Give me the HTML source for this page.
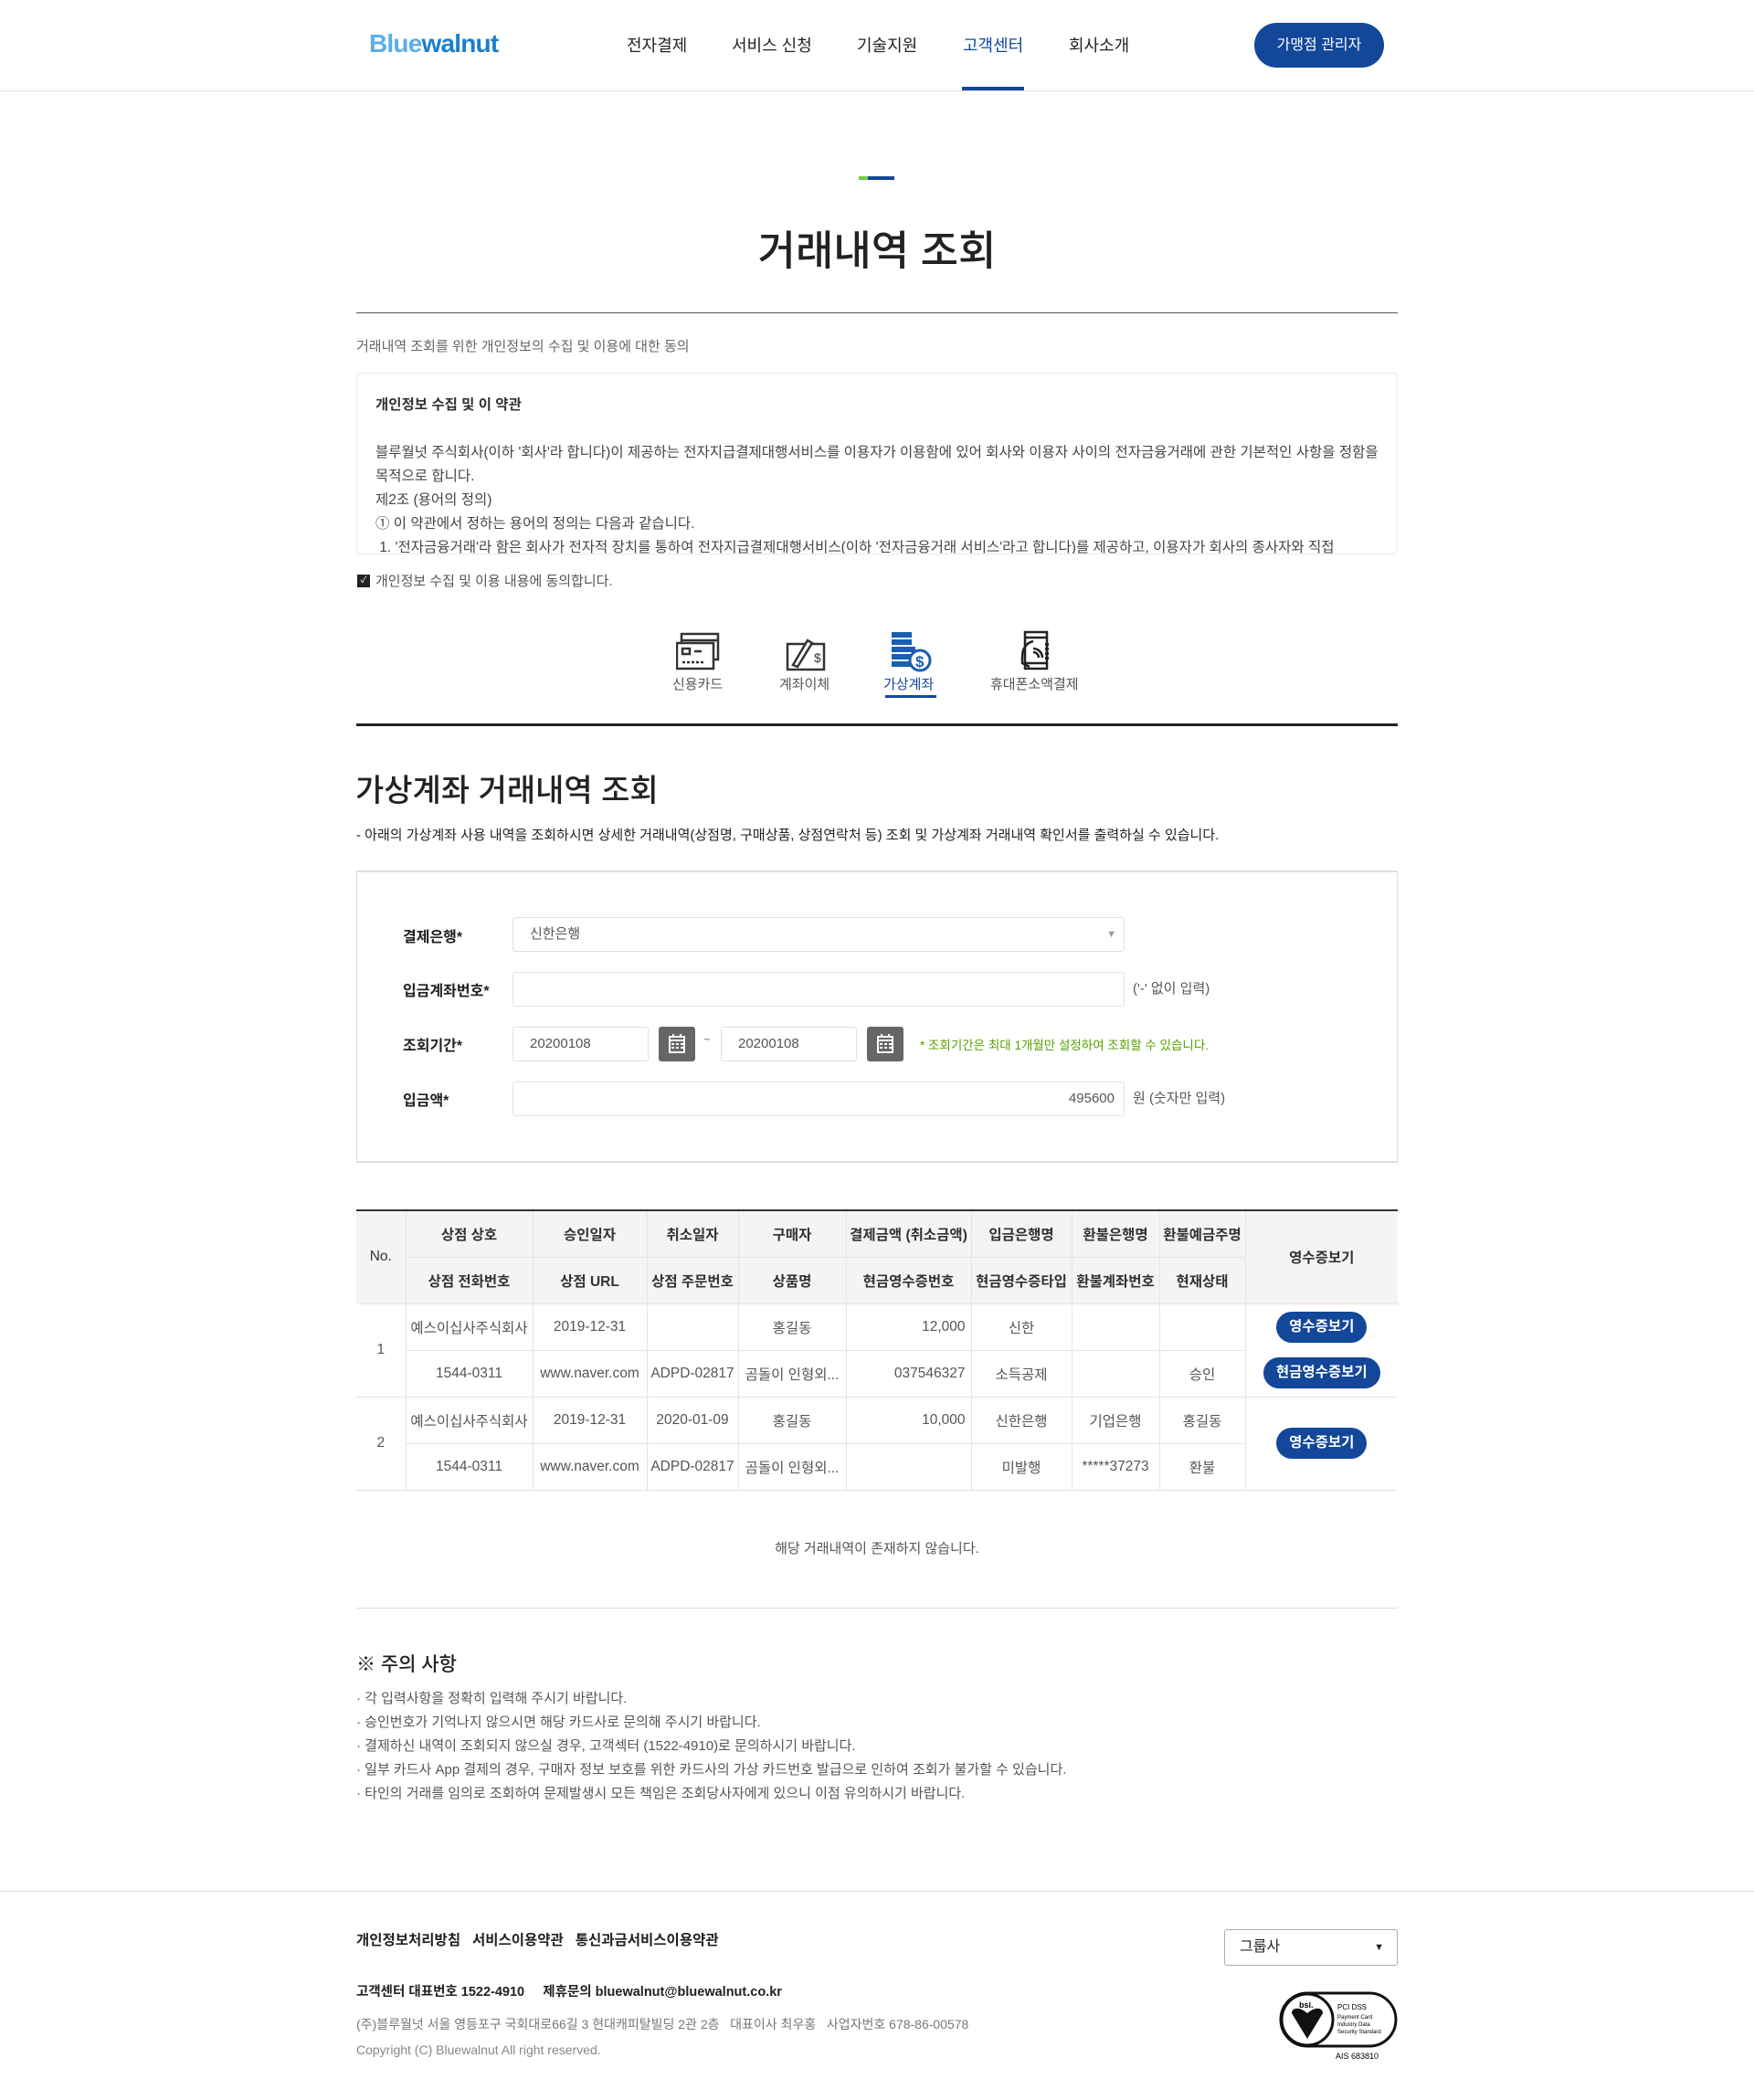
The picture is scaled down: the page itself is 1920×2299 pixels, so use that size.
<!DOCTYPE html>
<html><head><meta charset="utf-8">
<style>
*{margin:0;padding:0;box-sizing:border-box}
body{width:1920px;height:2299px;position:relative;background:#fff;font-family:"Liberation Sans","Noto Sans CJK KR",sans-serif;color:#333;overflow:hidden}
.a{position:absolute;white-space:nowrap}
.nav{font-size:18px;color:#222;top:36px}
.inp{position:absolute;border:1px solid #e2e2e2;border-radius:3px;background:#fff;font-size:15px;color:#555;padding:0 18px;line-height:36px;height:38px}
.lbl{font-size:16px;color:#222;font-weight:bold}
.cal{position:absolute;width:40px;height:38px;background:#666;border-radius:3px}
table{position:absolute;left:390px;top:1324px;width:1140px;border-collapse:collapse;table-layout:fixed;font-size:15.5px;color:#555}
td,th{border:1px solid #e4e4e4;height:51px;text-align:center;overflow:hidden;white-space:nowrap}
th{background:#f4f4f4;color:#333;font-weight:bold;font-size:15.5px}
tr td:first-child,tr th:first-child{border-left:none}
tr td:last-child,tr th:last-child{border-right:none}
.btn{display:inline-block;background:#12479a;color:#fff;font-weight:bold;border-radius:18px;padding:0 14px;line-height:34px;font-size:15.5px}
.li{font-size:15px;color:#555;left:390px}
</style></head><body>
<!-- header -->
<div class="a" style="left:404px;top:32px;font-size:28px;font-weight:bold;letter-spacing:-0.8px"><span style="color:#5aaee8">Blue</span><span style="color:#1a7fce">walnut</span></div>
<div class="a nav" style="left:686px">전자결제</div>
<div class="a nav" style="left:801px">서비스 신청</div>
<div class="a nav" style="left:938px">기술지원</div>
<div class="a nav" style="left:1054px;color:#12479a">고객센터</div>
<div class="a nav" style="left:1170px">회사소개</div>
<div class="a" style="left:1053px;top:95px;width:68px;height:4px;background:#12479a"></div>
<div class="a" style="left:1373px;top:25px;width:142px;height:49px;border-radius:25px;background:#12479a;color:#fff;font-size:16px;text-align:center;line-height:49px">가맹점 관리자</div>
<div class="a" style="left:0;top:99px;width:1920px;height:1px;background:#e5e5e5"></div>

<!-- title -->
<div class="a" style="left:940px;top:193px;width:10px;height:4px;background:#7ac943"></div>
<div class="a" style="left:950px;top:193px;width:29px;height:4px;background:#12479a"></div>
<div class="a" style="left:0;width:1920px;top:238px;text-align:center;font-size:45px;color:#222;font-weight:500">거래내역 조회</div>
<div class="a" style="left:390px;top:342px;width:1140px;height:1px;background:#555"></div>
<div class="a" style="left:390px;top:368px;font-size:15px;color:#666">거래내역 조회를 위한 개인정보의 수집 및 이용에 대한 동의</div>
<div class="a" style="left:390px;top:408px;width:1140px;height:199px;border:1px solid #e8e8e8;border-radius:4px;overflow:hidden;padding:22px 20px;font-size:15.5px;color:#444;line-height:26px;white-space:normal">
<div style="font-weight:bold;color:#333;margin-bottom:26px">개인정보 수집 및 이 약관</div>
블루월넛 주식회사(이하 '회사'라 합니다)이 제공하는 전자지급결제대행서비스를 이용자가 이용함에 있어 회사와 이용자 사이의 전자금융거래에 관한 기본적인 사항을 정함을 목적으로 합니다.<br>제2조 (용어의 정의)<br>① 이 약관에서 정하는 용어의 정의는 다음과 같습니다.<br>&nbsp;1. '전자금융거래'라 함은 회사가 전자적 장치를 통하여 전자지급결제대행서비스(이하 '전자금융거래 서비스'라고 합니다)를 제공하고, 이용자가 회사의 종사자와 직접
</div>
<div class="a" style="left:391px;top:629px;width:14px;height:14px;background:#222;color:#fff;font-size:10px;text-align:center;line-height:14px">✓</div>
<div class="a" style="left:411px;top:625px;font-size:15px;color:#555">개인정보 수집 및 이용 내용에 동의합니다.</div>

<!-- tabs icons -->
<svg class="a" style="left:740px;top:692px" width="48" height="42" viewBox="0 0 48 42" fill="none" stroke="#333" stroke-width="2.5"><rect x="6" y="2" width="40" height="28" fill="#fff"/><line x1="6" y1="9" x2="46" y2="9"/><rect x="1" y="12" width="40" height="28" fill="#fff"/><rect x="7" y="18" width="8" height="6"/><line x1="20" y1="21" x2="28" y2="21"/><line x1="7" y1="33" x2="30" y2="33" stroke-dasharray="3 2"/></svg>
<svg class="a" style="left:860px;top:695px" width="46" height="40" viewBox="0 0 46 40" fill="none" stroke="#333" stroke-width="2.5"><rect x="2" y="10" width="40" height="28"/><path d="M8 33 L24 6 L29 9 L13 35 Z" fill="#fff"/><text x="31" y="30" font-size="14" fill="#333" stroke="none" font-family="Liberation Sans">$</text></svg>
<svg class="a" style="left:974px;top:690px" width="46" height="46" viewBox="0 0 46 46"><g fill="#1a5eb0"><rect x="2" y="2" width="22" height="6"/><rect x="2" y="10" width="22" height="6"/><rect x="2" y="18" width="26" height="6"/><rect x="2" y="26" width="22" height="6"/><rect x="2" y="34" width="22" height="6"/></g><circle cx="33" cy="33" r="11" fill="#fff" stroke="#1a5eb0" stroke-width="3"/><text x="28" y="40" font-size="17" font-weight="bold" fill="#1a5eb0" font-family="Liberation Sans">$</text></svg>
<svg class="a" style="left:1115px;top:690px" width="40" height="46" viewBox="0 0 40 46" fill="none" stroke="#222" stroke-width="2.5"><rect x="7" y="2" width="24" height="40"/><line x1="7" y1="8" x2="31" y2="8"/><line x1="7" y1="36" x2="31" y2="36"/><path d="M16 12 C8 14 4 20 4 30 L4 36 L12 40"/><path d="M16 24 a6 6 0 0 1 6 6 M16 20 a10 10 0 0 1 10 10"/><line x1="31" y1="14" x2="31" y2="32" stroke-dasharray="3 2" stroke-width="4"/></svg>
<div class="a" style="left:736px;top:738px;font-size:15px;color:#555">신용카드</div>
<div class="a" style="left:853px;top:738px;font-size:15px;color:#555">계좌이체</div>
<div class="a" style="left:967px;top:738px;font-size:15px;color:#12479a">가상계좌</div>
<div class="a" style="left:969px;top:761px;width:56px;height:3px;background:#12479a"></div>
<div class="a" style="left:1084px;top:738px;font-size:15px;color:#555">휴대폰소액결제</div>
<div class="a" style="left:390px;top:792px;width:1140px;height:3px;background:#222"></div>

<!-- section -->
<div class="a" style="left:389px;top:838px;font-size:34px;color:#222;font-weight:500">가상계좌 거래내역 조회</div>
<div class="a" style="left:390px;top:903px;font-size:15px;color:#222">- 아래의 가상계좌 사용 내역을 조회하시면 상세한 거래내역(상점명, 구매상품, 상점연락처 등) 조회 및 가상계좌 거래내역 확인서를 출력하실 수 있습니다.</div>
<div class="a" style="left:390px;top:953px;width:1140px;height:320px;border:2px solid #ddd;border-width:2px 1px 2px 1px"></div>
<div class="a lbl" style="left:441px;top:1012px">결제은행*</div>
<div class="inp" style="left:561px;top:1004px;width:670px">신한은행<span style="position:absolute;right:8px;color:#999;font-size:11px">▼</span></div>
<div class="a lbl" style="left:441px;top:1071px">입금계좌번호*</div>
<div class="inp" style="left:561px;top:1064px;width:670px"></div>
<div class="a" style="left:1240px;top:1071px;font-size:15px;color:#555">('-' 없이 입력)</div>
<div class="a lbl" style="left:441px;top:1131px">조회기간*</div>
<div class="inp" style="left:561px;top:1124px;width:149px">20200108</div>
<div class="cal" style="left:721px;top:1124px"><svg width="40" height="38"><g fill="none" stroke="#fff" stroke-width="2"><rect x="12" y="11" width="16" height="17"/><line x1="12" y1="15" x2="28" y2="15"/><line x1="16" y1="8" x2="16" y2="12"/><line x1="24" y1="8" x2="24" y2="12"/></g><g fill="#fff"><rect x="14" y="18" width="3" height="2"/><rect x="19" y="18" width="3" height="2"/><rect x="24" y="18" width="3" height="2"/><rect x="14" y="22" width="3" height="2"/><rect x="19" y="22" width="3" height="2"/><rect x="24" y="22" width="3" height="2"/></g></svg></div>
<div class="a" style="left:770px;top:1130px;font-size:13px;color:#777">~</div>
<div class="inp" style="left:789px;top:1124px;width:149px">20200108</div>
<div class="cal" style="left:949px;top:1124px"><svg width="40" height="38"><g fill="none" stroke="#fff" stroke-width="2"><rect x="12" y="11" width="16" height="17"/><line x1="12" y1="15" x2="28" y2="15"/><line x1="16" y1="8" x2="16" y2="12"/><line x1="24" y1="8" x2="24" y2="12"/></g><g fill="#fff"><rect x="14" y="18" width="3" height="2"/><rect x="19" y="18" width="3" height="2"/><rect x="24" y="18" width="3" height="2"/><rect x="14" y="22" width="3" height="2"/><rect x="19" y="22" width="3" height="2"/><rect x="24" y="22" width="3" height="2"/></g></svg></div>
<div class="a" style="left:1007px;top:1133px;font-size:13.5px;color:#56a200">* 조회기간은 최대 1개월만 설정하여 조회할 수 있습니다.</div>
<div class="a lbl" style="left:441px;top:1191px">입금액*</div>
<div class="inp" style="left:561px;top:1184px;width:670px;text-align:right;padding-right:10px">495600</div>
<div class="a" style="left:1240px;top:1191px;font-size:15px;color:#555">원 (숫자만 입력)</div>

<!-- table -->
<table style="border-top:2px solid #333">
<colgroup><col style="width:54px"><col style="width:139px"><col style="width:125px"><col style="width:100px"><col style="width:118px"><col style="width:137px"><col style="width:110px"><col style="width:96px"><col style="width:94px"><col style="width:167px"></colgroup>
<tr><th rowspan="2" style="font-weight:normal">No.</th><th>상점 상호</th><th>승인일자</th><th>취소일자</th><th>구매자</th><th>결제금액 (취소금액)</th><th>입금은행명</th><th>환불은행명</th><th>환불예금주명</th><th rowspan="2">영수증보기</th></tr>
<tr><th>상점 전화번호</th><th>상점 URL</th><th>상점 주문번호</th><th>상품명</th><th>현금영수증번호</th><th>현금영수증타입</th><th>환불계좌번호</th><th>현재상태</th></tr>
<tr><td rowspan="2">1</td><td>예스이십사주식회사</td><td>2019-12-31</td><td></td><td>홍길동</td><td style="text-align:right;padding-right:6px">12,000</td><td>신한</td><td></td><td></td><td style="border-bottom:none"><span class="btn">영수증보기</span></td></tr>
<tr><td>1544-0311</td><td>www.naver.com</td><td>ADPD-02817</td><td>곰돌이 인형외...</td><td style="text-align:right;padding-right:6px">037546327</td><td>소득공제</td><td></td><td>승인</td><td style="border-top:none"><span class="btn">현금영수증보기</span></td></tr>
<tr><td rowspan="2">2</td><td>예스이십사주식회사</td><td>2019-12-31</td><td>2020-01-09</td><td>홍길동</td><td style="text-align:right;padding-right:6px">10,000</td><td>신한은행</td><td>기업은행</td><td>홍길동</td><td rowspan="2"><span class="btn">영수증보기</span></td></tr>
<tr><td>1544-0311</td><td>www.naver.com</td><td>ADPD-02817</td><td>곰돌이 인형외...</td><td></td><td>미발행</td><td>*****37273</td><td>환불</td></tr>
</table>
<div class="a" style="left:0;width:1920px;text-align:center;top:1684px;font-size:15px;color:#555">해당 거래내역이 존재하지 않습니다.</div>
<div class="a" style="left:390px;top:1760px;width:1140px;height:1px;background:#ddd"></div>

<div class="a" style="left:390px;top:1806px;font-size:21px;color:#222;font-weight:500">※ 주의 사항</div>
<div class="a li" style="top:1848px">· 각 입력사항을 정확히 입력해 주시기 바랍니다.</div>
<div class="a li" style="top:1874px">· 승인번호가 기억나지 않으시면 해당 카드사로 문의해 주시기 바랍니다.</div>
<div class="a li" style="top:1900px">· 결제하신 내역이 조회되지 않으실 경우, 고객섹터 (1522-4910)로 문의하시기 바랍니다.</div>
<div class="a li" style="top:1926px">· 일부 카드사 App 결제의 경우, 구매자 정보 보호를 위한 카드사의 가상 카드번호 발급으로 인하여 조회가 불가할 수 있습니다.</div>
<div class="a li" style="top:1952px">· 타인의 거래를 임의로 조회하여 문제발생시 모든 책임은 조회당사자에게 있으니 이점 유의하시기 바랍니다.</div>

<!-- footer -->
<div class="a" style="left:0;top:2070px;width:1920px;height:1px;background:#ddd"></div>
<div class="a" style="left:390px;top:2112px;font-size:15.5px;font-weight:bold;color:#222">개인정보처리방침&nbsp;&nbsp;&nbsp;서비스이용약관&nbsp;&nbsp;&nbsp;통신과금서비스이용약관</div>
<div class="a" style="left:1340px;top:2112px;width:190px;height:40px;border:1px solid #aaa;border-radius:3px;font-size:16px;color:#222;line-height:38px;padding-left:16px">그룹사<span style="position:absolute;right:14px;font-size:11px">▼</span></div>
<div class="a" style="left:390px;top:2169px;font-size:14.5px;font-weight:bold;color:#222">고객센터 대표번호 1522-4910&nbsp;&nbsp;&nbsp;&nbsp;&nbsp;제휴문의 bluewalnut@bluewalnut.co.kr</div>
<div class="a" style="left:390px;top:2206px;font-size:14px;color:#777">(주)블루월넛 서울 영등포구 국회대로66길 3 현대캐피탈빌딩 2관 2층&nbsp;&nbsp;&nbsp;대표이사 최우홍&nbsp;&nbsp;&nbsp;사업자번호 678-86-00578</div>
<div class="a" style="left:390px;top:2236px;font-size:14px;color:#888">Copyright (C) Bluewalnut All right reserved.</div>
<svg class="a" style="left:1400px;top:2180px" width="132" height="80" viewBox="0 0 132 80"><rect x="2" y="2" width="126" height="58" rx="29" fill="#fff" stroke="#111" stroke-width="3"/><circle cx="31" cy="31" r="28" fill="#fff" stroke="#111" stroke-width="3"/><path d="M14 24 C14 18 22 16 31 24 C40 16 48 18 48 24 L31 52 Z" fill="#111"/><text x="22" y="18" font-size="9" font-weight="bold" font-family="Liberation Sans">bsi.</text><text x="64" y="20" font-size="8" font-family="Liberation Sans">PCI DSS</text><text x="64" y="30" font-size="6" font-family="Liberation Sans">Payment Card</text><text x="64" y="38" font-size="6" font-family="Liberation Sans">Industry Data</text><text x="64" y="46" font-size="6" font-family="Liberation Sans">Security Standard</text><text x="62" y="74" font-size="9" font-family="Liberation Sans">AIS 683810</text></svg>
</body></html>
